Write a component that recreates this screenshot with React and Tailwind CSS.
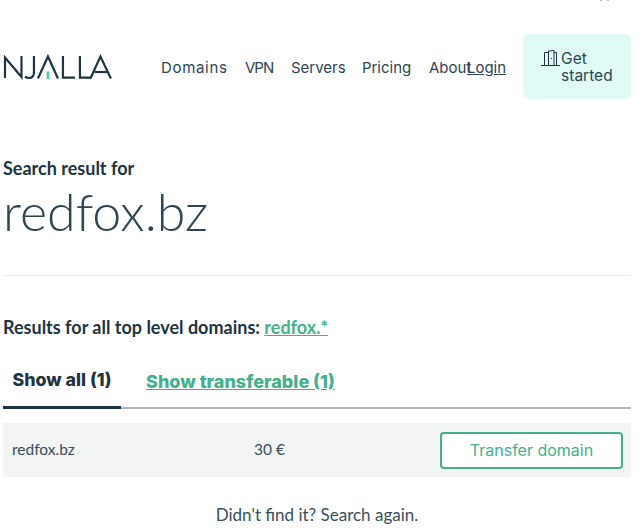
const poppins = { fontFamily: '"Inter", "Noto Sans", sans-serif' };

function Logo() {
  return (
    <svg width="110" height="28" viewBox="2 0 110 28" fill="none" stroke="#1e3440" strokeWidth="2.2" aria-label="NJALLA">
      <path d="M4 25V4.5L20.5 24V3" />
      <path d="M33 3V19.5C33 23 31 25 28 25C26.5 25 25.2 24.6 24 23.6" />
      <path d="M37 25.5L47 3.5L57 25.5" />
      <path d="M47 18.5V26" stroke="#4fc79e" strokeWidth="2.6" />
      <path d="M62 3V24.6H74" />
      <path d="M79 3V24.6H90" />
      <path d="M89.5 25.5L99.5 3.5L110 25.5" />
      <path d="M93.5 19H106" />
    </svg>
  );
}

function DoorIcon() {
  return (
    <svg width="19" height="16" viewBox="0 0 19 16" fill="none" stroke="#1e3440" strokeWidth="1" className="shrink-0">
      <path d="M0 15.5H19" />
      <path d="M3.5 15.5V2.5H7.5" />
      <path d="M7.5 15.5V1L13 .5V15.5" />
      <path d="M13 2.5H15.5V15.5" />
      <path d="M10 8.5H11" />
    </svg>
  );
}

export default function App() {
  return (
    <div className="relative h-[532px] w-[640px] overflow-hidden bg-white pl-[3px] pr-[9px] text-[#1e3440]" style={{ fontFamily: '"Lato", sans-serif' }}>
      <span className="absolute left-[600px] top-0 h-px w-[2px] bg-[#b8b8b8]" />
      <span className="absolute left-[607px] top-0 h-px w-[2px] bg-[#b8b8b8]" />
      <header className="flex items-center pt-[34px]" style={poppins}>
        <Logo />
        <nav className="ml-[48px] flex pt-[3px] text-[15px] text-[#2f4551]">
          <span className="w-[84px] tracking-[0.7px]">Domains</span>
          <span className="w-[46px] tracking-[-0.9px]">VPN</span>
          <span className="w-[71px]">Servers</span>
          <span className="w-[67px]">Pricing</span>
          <span className="w-[38px] whitespace-nowrap">About</span>
        </nav>
        <span className="pt-[3px] text-[15px] text-[#2f4551] underline">Login</span>
        <a className="ml-[17px] flex h-[65px] w-[108px] items-start rounded-md bg-[#e0fbf5] pl-[18px] pt-[16px] text-[15.5px] leading-[17px] text-[#2f4551]">
          <DoorIcon />
          <span className="ml-[1px]">Get started</span>
        </a>
      </header>

      <p className="mt-[58px] text-[18px] font-bold leading-[22px]">Search result for</p>
      <h1 className="mt-[4px] text-[52px] font-light leading-[56px] text-[#2f4551]">redfox.bz</h1>
      <hr className="mt-[36px] border-[#ececec]" />

      <p className="mt-[40px] text-[18px] font-bold leading-[22px]">
        Results for all top level domains: <a className="text-[#45b08c] underline">redfox.*</a>
      </p>

      <div className="mt-[23px] flex border-b-2 border-[#b5b5b5] font-extrabold" style={poppins}>
        <span className="-mb-[2px] flex h-[48px] w-[118px] items-center justify-center border-b-[3px] border-[#1e3440] pb-[6px] text-[17.8px]">Show all (1)</span>
        <span className="ml-[25px] flex h-[46px] items-center pb-[5px] text-[18px] text-[#45b08c] underline">Show transferable (1)</span>
      </div>

      <div className="mt-[14px] flex h-[54px] items-center bg-[#f3f5f5] pl-[9px] pr-[8px] text-[15.5px] text-[#3b4f5a]">
        <span className="w-[242px]">redfox.bz</span>
        <span className="w-[186px]">30 €</span>
        <a className="flex h-[37px] w-[183px] items-center justify-center rounded border-2 border-[#45b08c] bg-white text-[16px] text-[#45b08c]" style={poppins}>Transfer domain</a>
      </div>

      <p className="mt-[25px] text-center text-[17px] text-[#3b4f5a]">Didn't find it? Search again.</p>
    </div>
  );
}
